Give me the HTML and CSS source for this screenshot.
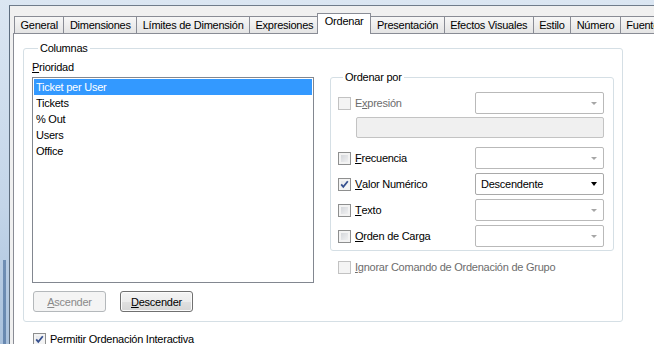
FILE: index.html
```html
<!DOCTYPE html>
<html lang="es">
<head>
  <meta charset="UTF-8">
  <title>Propiedades de Gráfico - Ordenar</title>
  <link rel="stylesheet" href="styles.css">
</head>
<body>

<div class="dialog">
  <div class="tabs">
    <div class="tab">General</div>
    <div class="tab">Dimensiones</div>
    <div class="tab">Límites de Dimensión</div>
    <div class="tab">Expresiones</div>
    <div class="tab active">Ordenar</div>
    <div class="tab">Presentación</div>
    <div class="tab">Efectos Visuales</div>
    <div class="tab">Estilo</div>
    <div class="tab">Número</div>
    <div class="tab">Fuente</div>
  </div>

  <div class="panel">
    <div class="group columnas">
      <div class="group-title">Columnas</div>
      <div class="columns-row">
        <div class="left-col">
          <div class="field-label"><u>P</u>rioridad</div>
          <div class="listbox">
            <div class="item selected">Ticket per User</div>
            <div class="item">Tickets</div>
            <div class="item">% Out</div>
            <div class="item">Users</div>
            <div class="item">Office</div>
          </div>
          <div class="btn-row">
            <button class="btn" disabled><u>A</u>scender</button>
            <button class="btn"><u>D</u>escender</button>
          </div>
        </div>

        <div class="right-col">
          <div class="group ordenar">
            <div class="group-title">Ordenar por</div>

            <div class="sort-row first">
              <div class="check disabled"><span class="cb"></span>E<u>x</u>presión</div>
              <div class="combo"><span class="arrow"></span></div>
            </div>
            <div class="textfield"></div>

            <div class="sort-row spaced">
              <div class="check"><span class="cb"></span><u>F</u>recuencia</div>
              <div class="combo"><span class="arrow"></span></div>
            </div>
            <div class="sort-row">
              <div class="check"><span class="cb checked"><svg width="11" height="11" viewBox="0 0 11 11"><path d="M2.2 5.4 L4.3 7.8 L8.8 2.3" fill="none" stroke="#36508f" stroke-width="1.8"/></svg></span><u>V</u>alor Numérico</div>
              <div class="combo active"><span class="combo-text">Descendente</span><span class="arrow"></span></div>
            </div>
            <div class="sort-row">
              <div class="check"><span class="cb"></span><u>T</u>exto</div>
              <div class="combo"><span class="arrow"></span></div>
            </div>
            <div class="sort-row">
              <div class="check"><span class="cb"></span><u>O</u>rden de Carga</div>
              <div class="combo"><span class="arrow"></span></div>
            </div>
          </div>

          <div class="check disabled ignore"><span class="cb"></span><u>I</u>gnorar Comando de Ordenación de Grupo</div>
        </div>
      </div>
    </div>

    <div class="check permitir"><span class="cb checked"><svg width="11" height="11" viewBox="0 0 11 11"><path d="M2.2 5.4 L4.3 7.8 L8.8 2.3" fill="none" stroke="#36508f" stroke-width="1.8"/></svg></span>Permitir Ordenación Interactiva</div>
  </div>
</div>

</body>
</html>
```

FILE: styles.css
```css
body {
  margin: 0;
  height: 344px;
  overflow: hidden;
  background:
    linear-gradient(to right, transparent 3px, rgba(50, 90, 140, 0.55) 3px, rgba(50, 90, 140, 0.55) 6px, transparent 6px) 0 260px / 9px 100% no-repeat,
    linear-gradient(to bottom, #dbe6f2 0%, #c3d5e9 60%, #a9c1dc 100%);
  font-family: "Liberation Sans", Arial, sans-serif;
  font-size: 11px;
  letter-spacing: -0.25px;
  color: #000;
}
u {
  text-decoration: underline;
  text-underline-offset: 1px;
}

.dialog {
  margin: 5px 0 0 9px;
  height: 339px;
  border-top: 1px solid #6f7c8b;
  border-left: 1px solid #5d6d7f;
  background: #f0f0f0;
  display: flex;
  flex-direction: column;
  overflow: hidden;
}

/* tab strip */
.tabs {
  display: flex;
  align-items: flex-end;
  padding: 7px 0 0 4px;
}
.tab {
  flex: none;
  height: 16px;
  line-height: 16px;
  padding: 0 5.5px;
  margin-right: -1px;
  border: 1px solid #898c95;
  border-bottom: none;
  background: linear-gradient(#f7f7f7, #e4e4e4);
  white-space: nowrap;
}
.tab.active {
  position: relative;
  z-index: 1;
  height: 15px;
  line-height: 15px;
  padding: 0 7px 5px;
  margin: 0 -1px -1px -2px;
  background: #fff;
}

.panel {
  flex: 1;
  margin-left: 3px;
  border-top: 1px solid #898c95;
  border-left: 1px solid #898c95;
  background: #fff;
  padding: 14px 0 0 9px;
}

/* group boxes */
.group {
  box-sizing: border-box;
  border: 1px solid #d5dfe5;
  border-radius: 3px;
}
.group-title {
  width: fit-content;
  margin: -8px 0 0 6px;
  padding: 0 2px;
  line-height: 15px;
  background: #fff;
}
.columnas {
  width: 600px;
  padding: 0 8px 9px 8px;
}
.columns-row {
  display: flex;
  align-items: flex-start;
}

.left-col {
  width: 282px;
}
.field-label {
  margin-top: 4px;
  line-height: 14px;
}
.listbox {
  box-sizing: border-box;
  height: 206px;
  margin-top: 3px;
  padding: 1px;
  border: 1px solid #828790;
  background: #fff;
}
.item {
  height: 16px;
  line-height: 16px;
  padding-left: 2px;
}
.item.selected {
  background: #3399ff;
  color: #fff;
}

.btn-row {
  display: flex;
  gap: 14px;
  margin: 8px 0 0 1px;
}
.btn {
  box-sizing: border-box;
  width: 73px;
  height: 21px;
  padding: 0;
  border: 1px solid #707070;
  border-radius: 3px;
  background: linear-gradient(#f4f4f4 0%, #ececec 50%, #e0e0e0 51%, #d6d6d6 100%);
  box-shadow: inset 0 0 0 1px #fbfbfb;
  font: inherit;
  letter-spacing: inherit;
  color: #000;
}
.btn:disabled {
  border-color: #b4b8bb;
  background: #f4f4f4;
  box-shadow: none;
  color: #8a8a8a;
}

.right-col {
  width: 284px;
  margin-left: 16px;
}
.ordenar {
  margin-top: 21px;
  padding: 0 9px 3px 7px;
}
.ordenar .group-title {
  margin-left: 5px;
}

.sort-row {
  display: flex;
  align-items: center;
  justify-content: space-between;
  height: 22px;
  margin-top: 4px;
}
.sort-row.first {
  margin-top: 7px;
}
.sort-row.spaced {
  margin-top: 9px;
}

/* checkboxes */
.check {
  display: flex;
  align-items: center;
  line-height: 15px;
  white-space: nowrap;
}
.check.disabled {
  color: #6d6d6d;
}
.cb {
  box-sizing: border-box;
  flex: none;
  width: 13px;
  height: 13px;
  margin-right: 4px;
  border: 1px solid #8e8f8f;
  background: linear-gradient(135deg, #cdd0d5, #f7f7f7);
  box-shadow: inset 0 0 0 2px #f3f3f3;
}
.cb svg {
  display: block;
}
.cb.checked {
  background: linear-gradient(135deg, #e2e4e8, #fbfbfb);
}
.check.disabled .cb {
  border-color: #c2c2c2;
  background: #f4f4f4;
  box-shadow: none;
}
.ignore {
  margin: 9px 0 0 8px;
}
.permitir {
  margin: 10px 0 0 10px;
}

/* combos and fields */
.combo {
  box-sizing: border-box;
  width: 129px;
  height: 22px;
  border: 1px solid #b9b9b9;
  border-radius: 2px;
  background: #fff;
  display: flex;
  align-items: center;
  padding: 0 6px 0 5px;
}
.combo-text {
  flex: 1;
}
.arrow {
  margin-left: auto;
  width: 0;
  height: 0;
  border-left: 3px solid transparent;
  border-right: 3px solid transparent;
  border-top: 3px solid #a6a6a6;
}
.combo.active {
  border-color: #a9a9a9;
}
.combo.active .arrow {
  border-left-width: 3.5px;
  border-right-width: 3.5px;
  border-top: 4px solid #000;
}
.textfield {
  box-sizing: border-box;
  width: 248px;
  height: 21px;
  margin: 3px 0 0 18px;
  border: 1px solid #c3c3c3;
  border-radius: 2px;
  background: #f0f0f0;
}
```
